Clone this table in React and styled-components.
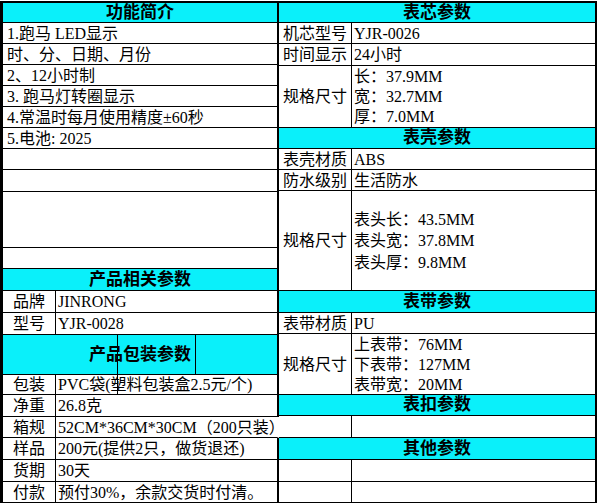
import React from "react";
import styled, { createGlobalStyle } from "styled-components";

const GlobalStyle = createGlobalStyle`
  html, body {
    margin: 0;
    padding: 0;
    background: #fff;
  }
  body {
    font-family: "Liberation Serif", "Noto Sans CJK SC", serif;
    color: #000;
  }
`;

const Sheet = styled.div`
  display: flex;
  width: 597px;
  height: 503px;
  padding-top: 1px;
  box-sizing: border-box;
  overflow: hidden;
`;

const Table = styled.div`
  position: relative;
  display: flex;
  flex-direction: column;
  flex: none;
  width: ${(p) => p.$w}px;
  border-top: 2px solid #000;
`;

const Row = styled.div`
  display: flex;
  flex: none;
  height: ${(p) => p.$h}px;
  box-sizing: border-box;
  border-bottom: 1px solid #000;
  border-left: ${(p) => p.$bl}px solid #000;
  border-right: ${(p) => p.$br}px solid ${(p) => (p.$open ? "#fff" : "#000")};
  font-size: 16px;
  line-height: 20px;
`;

const Header = styled(Row)`
  align-items: center;
  justify-content: center;
  background: #0af0fa;
  font-size: 17px;
  font-weight: bold;
`;

const Label = styled.div`
  display: flex;
  align-items: center;
  justify-content: center;
  flex: none;
  width: ${(p) => p.$w}px;
  border-right: 1px solid #000;
  white-space: nowrap;
  padding-top: 1px;
`;

const Value = styled.div`
  display: flex;
  flex-direction: column;
  justify-content: center;
  flex: 1;
  min-width: 0;
  padding-left: ${(p) => p.$pad}px;
  padding-top: 1px;
  white-space: nowrap;
  line-height: ${(p) => p.$lh || 20}px;
`;

const Mark = styled.div`
  position: absolute;
  left: ${(p) => p.$x}px;
  top: ${(p) => p.$y}px;
  width: 1px;
  height: ${(p) => p.$len}px;
  background: #000;
`;

const leftRows = [
  { kind: "head", text: "功能简介", h: 20 },
  { kind: "full", text: "1.跑马 LED显示", h: 21 },
  { kind: "full", text: "时、分、日期、月份", h: 21 },
  { kind: "full", text: "2、12小时制", h: 21 },
  { kind: "full", text: "3. 跑马灯转圈显示", h: 21 },
  { kind: "full", text: "4.常温时每月使用精度±60秒", h: 21 },
  { kind: "full", text: "5.电池: 2025", h: 21 },
  { kind: "full", text: "", h: 21 },
  { kind: "full", text: "", h: 22 },
  { kind: "full", text: "", h: 56 },
  { kind: "full", text: "", h: 21 },
  { kind: "head", text: "产品相关参数", h: 22 },
  { kind: "pair", label: "品牌", value: ["JINRONG"], h: 22 },
  { kind: "pair", label: "型号", value: ["YJR-0028"], h: 22 },
  { kind: "head", text: "产品包装参数", h: 40 },
  { kind: "pair", label: "包装", value: ["PVC袋(塑料包装盒2.5元/个)"], h: 20 },
  { kind: "pair", label: "净重", value: ["26.8克"], h: 22 },
  { kind: "pair", label: "箱规", value: ["52CM*36CM*30CM（200只装）"], h: 21, open: true },
  { kind: "pair", label: "样品", value: ["200元(提供2只，做货退还)"], h: 22 },
  { kind: "pair", label: "货期", value: ["30天"], h: 22 },
  { kind: "pair", label: "付款", value: ["预付30%，余款交货时付清。"], h: 21 },
];

const rightRows = [
  { kind: "head", text: "表芯参数", h: 20 },
  { kind: "pair", label: "机芯型号", value: ["YJR-0026"], h: 21 },
  { kind: "pair", label: "时间显示", value: ["24小时"], h: 22 },
  { kind: "pair", label: "规格尺寸", value: ["长：37.9MM", "宽：32.7MM", "厚：7.0MM"], h: 62 },
  { kind: "head", text: "表壳参数", h: 21 },
  { kind: "pair", label: "表壳材质", value: ["ABS"], h: 21 },
  { kind: "pair", label: "防水级别", value: ["生活防水"], h: 21 },
  { kind: "pair", label: "规格尺寸", value: ["表头长：43.5MM", "表头宽：37.8MM", "表头厚：9.8MM"], h: 100, lh: 21.5 },
  { kind: "head", text: "表带参数", h: 22 },
  { kind: "pair", label: "表带材质", value: ["PU"], h: 21 },
  { kind: "pair", label: "规格尺寸", value: ["上表带：76MM", "下表带：127MM", "表带宽：20MM"], h: 61 },
  { kind: "head", text: "表扣参数", h: 21 },
  { kind: "pair", label: "", value: [], h: 22 },
  { kind: "head", text: "其他参数", h: 22 },
  { kind: "pair", label: "", value: [], h: 22 },
  { kind: "pair", label: "", value: [], h: 21 },
];

const SheetTable = ({ rows, width, labelWidth, bl, br, valuePad, children }) => (
  <Table $w={width}>
    {rows.map((r, i) => {
      const common = { key: i, $h: r.h, $bl: bl, $br: br };
      if (r.kind === "head") {
        return <Header {...common}>{r.text}</Header>;
      }
      if (r.kind === "full") {
        return (
          <Row {...common}>
            <Value $pad={4}>
              <div>{r.text}</div>
            </Value>
          </Row>
        );
      }
      return (
        <Row {...common} $open={r.open}>
          <Label $w={labelWidth}>{r.label}</Label>
          <Value $pad={valuePad} $lh={r.lh}>
            {r.value.map((line, j) => (
              <div key={j}>{line}</div>
            ))}
          </Value>
        </Row>
      );
    })}
    {children}
  </Table>
);

export default function App() {
  return (
    <>
      <GlobalStyle />
      <Sheet>
        <SheetTable rows={leftRows} width={279} labelWidth={52} bl={3} br={2} valuePad={2}>
          {/* stray lines left over in the packaging header */}
          <Mark $x={117} $y={331} $len={60} />
          <Mark $x={195} $y={331} $len={41} />
        </SheetTable>
        <SheetTable rows={rightRows} width={318} labelWidth={72} bl={0} br={2} valuePad={2} />
      </Sheet>
    </>
  );
}
